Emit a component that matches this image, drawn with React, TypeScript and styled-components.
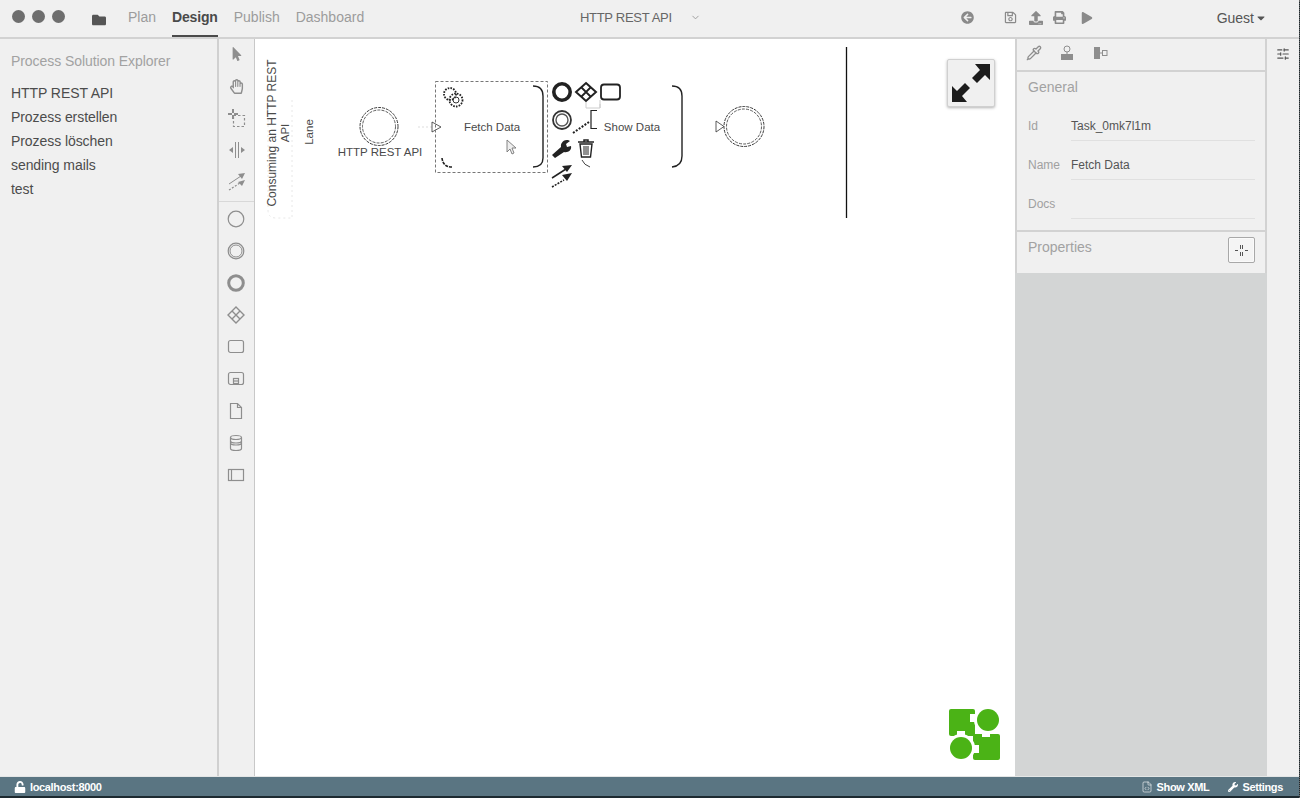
import React from "react";
import styled, { createGlobalStyle } from "styled-components";
import { FaFolder, FaArrowCircleLeft, FaRegSave, FaUpload, FaPrint, FaPlay, FaCaretDown, FaUnlock, FaWrench, FaMousePointer, FaRegHandPaper } from "react-icons/fa";
import { ChevronDown, SlidersHorizontal, Pipette, FileCode } from "lucide-react";

const Global = createGlobalStyle`
  html, body { margin: 0; padding: 0; height: 100%; overflow: hidden; background: #fff; }
  * { box-sizing: border-box; }
  body { font-family: "Liberation Sans", Arial, sans-serif; }
`;

const Page = styled.div`
  width: 1300px; height: 798px; display: flex; flex-direction: column;
  background: #1d2a30; border-right: 1px dotted #666; overflow: hidden;
`;
const Header = styled.header`
  height: 39px; flex: none; display: flex; align-items: stretch;
  background: #f0f0f0; border-bottom: 2px solid #d2d2d2; padding-left: 12px; font-size: 14px;
`;
const Lights = styled.div`display: flex; gap: 7px; align-items: center; margin-right: 27px; height: 32px;`;
const Light = styled.span`width: 13px; height: 13px; border-radius: 50%; background: #6e6e6e;`;
const FolderSlot = styled.div`display: flex; align-items: center; color: #555; margin-right: 22px; font-size: 14px; padding-top: 3px;`;
const Nav = styled.nav`display: flex; gap: 16px; width: 452px;`;
const NavItem = styled.a<{ $active?: boolean }>`
  display: flex; align-items: center; height: 37px; padding: 0 0 2px; margin-bottom: 0; line-height: 1;
  color: ${p => (p.$active ? "#4a4a4a" : "#9c9c9c")};
  font-weight: ${p => (p.$active ? 700 : 400)};
  letter-spacing: ${p => (p.$active ? "-0.16px" : "0")};
  border-bottom: 2px solid ${p => (p.$active ? "#4a4a4a" : "transparent")};
`;
const Title = styled.div`display: flex; align-items: center; gap: 18px; color: #666; font-size: 13px; letter-spacing: -0.3px; height: 35px; width: 125px; white-space: nowrap; flex: none;
  svg { flex: none; }
`;
const HeaderTools = styled.div`display: flex; align-items: center; height: 35px; color: #8a8a8a; margin-left: 256px;`;
const HeaderTool = styled.span<{ $gap: number }>`display: flex; margin-right: ${p => p.$gap}px;`;
const Guest = styled.div`display: flex; align-items: center; gap: 1px; color: #555; font-size: 14px; height: 35px; margin-left: auto; margin-right: 32px;`;

const Body = styled.div`flex: 1; display: flex; min-height: 0;`;
const Sidebar = styled.aside`width: 217px; flex: none; background: #f0f0f0; padding: 14px 11px; font-size: 14px; letter-spacing: -0.07px;`;
const SidebarTitle = styled.div`color: #a2a2a2; line-height: 16px; margin-bottom: 12px;`;
const SidebarItem = styled.div`color: #4c4c4c; line-height: 24px;`;

const Palette = styled.div`
  width: 38px; flex: none; background: #f0f0f0; padding-right: 1px;
  border-left: 2px solid #d0d0d0; border-right: 1px solid #c8c8c8; color: #8e8e8e;
`;
const ToolGroup = styled.div<{ $first?: boolean }>`
  padding: ${p => (p.$first ? "0 0 2px" : "2px 0 0")};
  ${p => (p.$first ? "border-bottom: 1px solid #d8d8d8; margin-right: -1px;" : "")}
`;
const Tool = styled.div`height: 32px; padding-bottom: 2px; display: flex; align-items: center; justify-content: center;`;

const Canvas = styled.main`position: relative; width: 760px; flex: none; background: #fff;`;
const Diagram = styled.svg`position: absolute; inset: 0; display: block;`;
const Fullscreen = styled.div`
  position: absolute; left: 692px; top: 20px; width: 48px; height: 48px;
  background: #f0f0f0; border: 1px solid #d0d0d0; border-radius: 2px; box-shadow: 0 1px 3px rgba(0,0,0,.3);
  display: flex; align-items: center; justify-content: center;
`;
const Logo = styled.svg`position: absolute; left: 694px; top: 670px;`;

const Props = styled.section`
  width: 252px; flex: none; background: #d3d5d5; display: flex; flex-direction: column; align-items: stretch;
`;
const PropCard = styled.div`
  background: #f0f0f0; border: 2px solid #d2d2d2; border-top: 0; border-bottom: 0;
`;
const PropTabs = styled(PropCard)`height: 33px; display: flex; align-items: center; gap: 17px; padding: 0 9px 3px 9px; color: #8e8e8e; border-bottom: 2px solid #d2d2d2; flex: none;`;
const GeneralCard = styled(PropCard)`height: 160px; padding: 7px 10px 0 11px; border-bottom: 2px solid #d2d2d2; flex: none;`;
const CardTitle = styled.div`font-size: 14px; color: #a2a2a2; line-height: 16px;`;
const Rows = styled.div`display: flex; flex-direction: column; margin-top: 15px;`;
const Row = styled.div`display: flex; height: 39px; align-items: stretch; font-size: 12px;`;
const RowLabel = styled.div`width: 43px; flex: none; color: #a0a0a0; line-height: 28px; padding-top: 2px;`;
const RowValue = styled.div`flex: 1; color: #555; line-height: 28px; padding: 2px 0 0 0; border-bottom: 1px solid #e0e0e0; height: 31px;`;
const PropertiesCard = styled(PropCard)`height: 41px; padding: 7px 10px 0 11px; display: flex; justify-content: space-between; flex: none;`;
const AddButton = styled.div`
  width: 27px; height: 26px; margin-top: -2px; border: 1px solid #a8a8a8; border-radius: 2px; background: #f4f4f4;
  display: flex; align-items: center; justify-content: center; box-shadow: inset 0 0 0 1px #fafafa;
`;
const Strip = styled.aside`
  flex: 1; background: #f0f0f0; display: flex; justify-content: center; padding-top: 8px; color: #555;
`;

const Footer = styled.footer`
  height: 20px; flex: none; background: #5a7582; color: #fff; font-size: 11px; font-weight: 700;
  display: flex; align-items: center; padding: 0 16px 0 14px; letter-spacing: -0.35px;
  border-top: 1px solid #e4e6e6;
`;
const FooterItem = styled.div<{ $ml?: string }>`display: flex; align-items: center; gap: 4px; ${p => (p.$ml ? `margin-left: ${p.$ml};` : "")}`;
const Bottom = styled.div`height: 2px; flex: none; background: #1d2a30;`;

const st = { fill: "none", stroke: "currentColor", strokeWidth: 1.2 };

const Selection = () => (
  <svg width="20" height="20" viewBox="0 0 20 20" {...st}>
    <path d="M6 1v4M6 7v4M1 6h4M7 6h4" strokeWidth="2" />
    <rect x="6.5" y="7.500" width="11" height="11" strokeDasharray="2.5 2" />
  </svg>
);
const SpaceTool = () => (
  <svg width="20" height="20" viewBox="0 0 20 20" fill="currentColor">
    <path d="M8 2v16h1V2zM11 2v16h1V2z" />
    <path d="M2 10l4-3v6zM18 10l-4-3v6z" />
  </svg>
);
const ConnectTool = () => (
  <svg width="20" height="20" viewBox="0 0 20 20" fill="currentColor" stroke="currentColor">
    <path d="M2 12L14 4" strokeWidth="1" />
    <path d="M18 1l-7 1 4 5zM18 8l-7 2 4 4z" stroke="none" />
    <path d="M2 18L13 11" strokeWidth="1.2" strokeDasharray="2 1.5" />
  </svg>
);
const Circle = ({ w, double }: { w: number; double?: boolean }) => (
  <svg width="20" height="20" viewBox="0 0 20 20" fill="none" stroke="currentColor">
    <circle cx="10" cy="10" r={w > 2 ? 7.3 : 7.8} strokeWidth={w} />
    {double && <circle cx="10" cy="10" r="6" strokeWidth="1" />}
  </svg>
);
const Gateway = () => (
  <svg width="20" height="20" viewBox="0 0 20 20" {...st}>
    <path d="M10 2l8 8-8 8-8-8z" strokeWidth="1.4" />
    <path d="M6 6l8 8M14 6l-8 8" strokeWidth="1.4" />
  </svg>
);
const TaskIcon = () => (
  <svg width="20" height="20" viewBox="0 0 20 20" {...st}><rect x="2.5" y="3.5" width="15" height="12" rx="2" /></svg>
);
const SubIcon = () => (
  <svg width="20" height="20" viewBox="0 0 20 20" {...st}>
    <rect x="2.5" y="3.5" width="15" height="12" rx="2" />
    <rect x="7.5" y="9.5" width="5" height="5" />
    <path d="M7.500 12h5" />
  </svg>
);
const DocIcon = () => (
  <svg width="20" height="20" viewBox="0 0 20 20" {...st}><path d="M4.500 2.500h7l4 4v11h-11zM11.500 2.500v4h4" /></svg>
);
const DbIcon = () => (
  <svg width="20" height="20" viewBox="0 0 20 20" {...st}>
    <ellipse cx="10" cy="4.5" rx="5.5" ry="2" />
    <path d="M4.500 4.500v11c0 1 2.500 2 5.500 2s5.500-1 5.500-2v-11" />
    <path d="M4.500 8c0 1 2.500 2 5.500 2s5.500-1 5.500-2M4.500 10c0 1 2.500 2 5.500 2s5.500-1 5.500-2" />
  </svg>
);
const PoolIcon = () => (
  <svg width="20" height="20" viewBox="0 0 20 20" {...st}>
    <rect x="2.5" y="4.5" width="15" height="11" />
    <path d="M5.500 4.500v11" />
  </svg>
);
const Stamp = () => (
  <svg width="16" height="16" viewBox="0 0 16 16" fill="currentColor">
    <circle cx="8" cy="4" r="3" fill="none" stroke="currentColor" />
    <path d="M2 9h12v6H2z" />
    <path d="M8 7v2" stroke="currentColor" />
  </svg>
);
const AlignIcon = () => (
  <svg width="16" height="16" viewBox="0 0 16 16" fill="currentColor">
    <rect x="2" y="2" width="6" height="12" />
    <path d="M8 8h2" stroke="currentColor" />
    <rect x="10.5" y="5.500" width="4.500" height="5" fill="none" stroke="currentColor" />
  </svg>
);

const Ring = ({ cx, cy, r }: { cx: number; cy: number; r: number }) => (
  <>
    <circle cx={cx} cy={cy} r={r} fill="none" stroke="#222" strokeWidth="0.9" strokeDasharray="3 1" />
    <circle cx={cx} cy={cy} r={r - 2.5} fill="none" stroke="#333" strokeWidth="0.8" strokeDasharray="3 1.2" />
  </>
);

const lbl = { fontFamily: "'Liberation Sans', Arial, sans-serif", fontSize: 11.5, fill: "#4a4a4a" };

const BpmnDiagram = () => (
  <Diagram width="760" height="737" viewBox="255 39 760 737">
    <path d="M846.500 47v171" stroke="#111" strokeWidth="1.3" />
    <path d="M268 60v150q0 8 8 8h16M292 100v118" fill="none" stroke="#e2e2e2" strokeWidth="0.8" strokeDasharray="2 3" />
    <text {...lbl} fontSize="12" textAnchor="middle" transform="translate(276 133) rotate(-90)">Consuming an HTTP REST</text>
    <text {...lbl} textAnchor="middle" transform="translate(289 133) rotate(-90)">API</text>
    <text {...lbl} textAnchor="middle" transform="translate(313 132) rotate(-90)">Lane</text>

    <Ring cx={379} cy={126.5} r={19} />
    <text {...lbl} x="380" y="156" textAnchor="middle">HTTP REST API</text>
    <path d="M418 127h14" stroke="#ddd" strokeDasharray="2 2" />
    <path d="M432 122v10l9-5z" fill="#fff" stroke="#333" strokeWidth="0.8" />

    <rect x="435.500" y="81.500" width="112" height="91" fill="none" stroke="#777" strokeWidth="1" strokeDasharray="3 2" />
    <path d="M533 86q10 0 10 10v62q0 9-10 9" fill="none" stroke="#222" strokeWidth="1.4" />
    <path d="M442 158q1 9 10 9" fill="none" stroke="#222" strokeWidth="1.6" strokeDasharray="3 1" />
    <g fill="none" stroke="#222" strokeWidth="1.8" strokeDasharray="1.6 1.2">
      <circle cx="450" cy="94" r="6" /><circle cx="456" cy="100" r="6.500" />
    </g>
    <circle cx="456" cy="100" r="3" fill="none" stroke="#333" strokeWidth="1" />
    <text {...lbl} x="492" y="131" textAnchor="middle">Fetch Data</text>
    <path d="M507 140v12l3-3 2 5 2-1-2-5h4z" fill="#eee" stroke="#777" strokeWidth="0.9" />

    <circle cx="562" cy="92" r="8.2" fill="none" stroke="#222" strokeWidth="3.6" />
    <path d="M586 83l10 9-10 9-10-9z" fill="none" stroke="#222" strokeWidth="2" />
    <path d="M581 87l10 10M591 87l-10 10" stroke="#222" strokeWidth="1.8" />
    <rect x="601" y="84.500" width="19" height="15" rx="3" fill="none" stroke="#222" strokeWidth="1.8" />
    <path d="M586 102v6h14v-4M600 100v8" fill="none" stroke="#ccc" strokeWidth="1" />
    <circle cx="562" cy="120" r="9" fill="none" stroke="#333" strokeWidth="1.8" />
    <circle cx="562" cy="120" r="6" fill="none" stroke="#555" strokeWidth="1.4" />
    <path d="M573 133l16-11" stroke="#222" strokeWidth="2" strokeDasharray="2 1.5" />
    <path d="M597 110.500h-6v18h6" fill="none" stroke="#222" strokeWidth="1.2" />
    <path d="M552 155l9-8a6 6 0 0 1 7-7l2 1-4 3 1 3 4-1c1 4-3 7-7 6l-9 6z" fill="#222" />
    <g fill="none" stroke="#222">
      <path d="M578 142h16M584 142v-2h4v2" strokeWidth="1.500" />
      <path d="M580 144l1.500 13h9l1.500-13z" strokeWidth="1.400" />
      <path d="M584 146v9M586 146v9M588 146v9" strokeWidth="1" />
    </g>
    <path d="M552 178l14-9" stroke="#222" strokeWidth="1.500" />
    <path d="M572 165l-10 1 5 6zM572 173l-10 2 5 6z" fill="#222" />
    <path d="M552 187l12-7" stroke="#222" strokeWidth="1.600" strokeDasharray="2 1.200" />

    <text {...lbl} x="632" y="131" textAnchor="middle">Show Data</text>
    <path d="M672 86q10 0 10 10v60q0 10-10 11" fill="none" stroke="#222" strokeWidth="1.400" />
    <path d="M582 160q2 5 8 7" fill="none" stroke="#444" strokeWidth="1" />
    <Ring cx={744} cy={126.5} r={20} />
    <path d="M716 121v11l8-5.500z" fill="#fff" stroke="#333" strokeWidth="0.8" />
  </Diagram>
);

const GreenLogo = () => (
  <Logo width="52" height="52" viewBox="0 0 52 52">
    <rect x="0" y="0" width="26" height="27" rx="2" fill="#4bb316" />
    <rect x="24" y="25" width="27" height="26" rx="2" fill="#4bb316" />
    <g fill="#fff">
      <circle cx="39" cy="11" r="14" />
      <circle cx="12" cy="39" r="14" />
      <rect x="21" y="5" width="6" height="8" />
      <rect x="33" y="22" width="8" height="6" />
      <rect x="24" y="36" width="6" height="8" />
      <rect x="8" y="22" width="8" height="6" />
    </g>
    <circle cx="39" cy="11" r="11" fill="#4bb316" />
    <circle cx="12" cy="39" r="11" fill="#4bb316" />
  </Logo>
);

const ExpandArrows = () => (
  <svg width="38" height="38" viewBox="0 0 38 38" fill="#1c1c1c">
    <path d="M38 0v16l-5-5-8 8-5-5 8-8-5-6z" />
    <path d="M0 38V22l5 5 8-8 5 5-8 8 5 6z" />
  </svg>
);

const PlusSplit = () => (
  <svg width="13" height="13" viewBox="0 0 13 13" stroke="#555" strokeWidth="1">
    <path d="M5.500 1v4M5.500 8v4M7.500 1v4M7.500 8v4M0 6.500h3M10 6.500h3" />
  </svg>
);

export default function App() {
  return (
    <Page>
      <Global />
      <Header>
        <Lights><Light /><Light /><Light /></Lights>
        <FolderSlot><FaFolder size={14} /></FolderSlot>
        <Nav>
          <NavItem>Plan</NavItem>
          <NavItem $active>Design</NavItem>
          <NavItem>Publish</NavItem>
          <NavItem>Dashboard</NavItem>
        </Nav>
        <Title>HTTP REST API <ChevronDown size={11} color="#999" /></Title>
        <HeaderTools>
          <HeaderTool $gap={30}><FaArrowCircleLeft size={13} /></HeaderTool>
          <HeaderTool $gap={12}><FaRegSave size={13} /></HeaderTool>
          <HeaderTool $gap={10}><FaUpload size={14} /></HeaderTool>
          <HeaderTool $gap={15}><FaPrint size={13} /></HeaderTool>
          <HeaderTool $gap={0}><FaPlay size={12} /></HeaderTool>
        </HeaderTools>
        <Guest>Guest <FaCaretDown size={12} /></Guest>
      </Header>
      <Body>
        <Sidebar>
          <SidebarTitle>Process Solution Explorer</SidebarTitle>
          <SidebarItem>HTTP REST API</SidebarItem>
          <SidebarItem>Prozess erstellen</SidebarItem>
          <SidebarItem>Prozess löschen</SidebarItem>
          <SidebarItem>sending mails</SidebarItem>
          <SidebarItem>test</SidebarItem>
        </Sidebar>
        <Palette>
          <ToolGroup $first>
            <Tool><FaMousePointer size={14} /></Tool>
            <Tool><FaRegHandPaper size={15} /></Tool>
            <Tool><Selection /></Tool>
            <Tool><SpaceTool /></Tool>
            <Tool><ConnectTool /></Tool>
          </ToolGroup>
          <ToolGroup>
            <Tool><Circle w={1.2} /></Tool>
            <Tool><Circle w={1.2} double /></Tool>
            <Tool><Circle w={3} /></Tool>
            <Tool><Gateway /></Tool>
            <Tool><TaskIcon /></Tool>
            <Tool><SubIcon /></Tool>
            <Tool><DocIcon /></Tool>
            <Tool><DbIcon /></Tool>
            <Tool><PoolIcon /></Tool>
          </ToolGroup>
        </Palette>
        <Canvas>
          <BpmnDiagram />
          <Fullscreen><ExpandArrows /></Fullscreen>
          <GreenLogo />
        </Canvas>
        <Props>
          <PropTabs>
            <Pipette size={16} />
            <Stamp />
            <AlignIcon />
          </PropTabs>
          <GeneralCard>
            <CardTitle>General</CardTitle>
            <Rows>
              <Row><RowLabel>Id</RowLabel><RowValue>Task_0mk7l1m</RowValue></Row>
              <Row><RowLabel>Name</RowLabel><RowValue>Fetch Data</RowValue></Row>
              <Row><RowLabel>Docs</RowLabel><RowValue /></Row>
            </Rows>
          </GeneralCard>
          <PropertiesCard>
            <CardTitle>Properties</CardTitle>
            <AddButton><PlusSplit /></AddButton>
          </PropertiesCard>
        </Props>
        <Strip><SlidersHorizontal size={14} /></Strip>
      </Body>
      <Footer>
        <FooterItem><FaUnlock size={12} /> localhost:8000</FooterItem>
        <FooterItem $ml="auto"><FileCode size={12} strokeWidth={1.2} /> Show XML</FooterItem>
        <FooterItem $ml="19px"><FaWrench size={10} /> Settings</FooterItem>
      </Footer>
      <Bottom />
    </Page>
  );
}
